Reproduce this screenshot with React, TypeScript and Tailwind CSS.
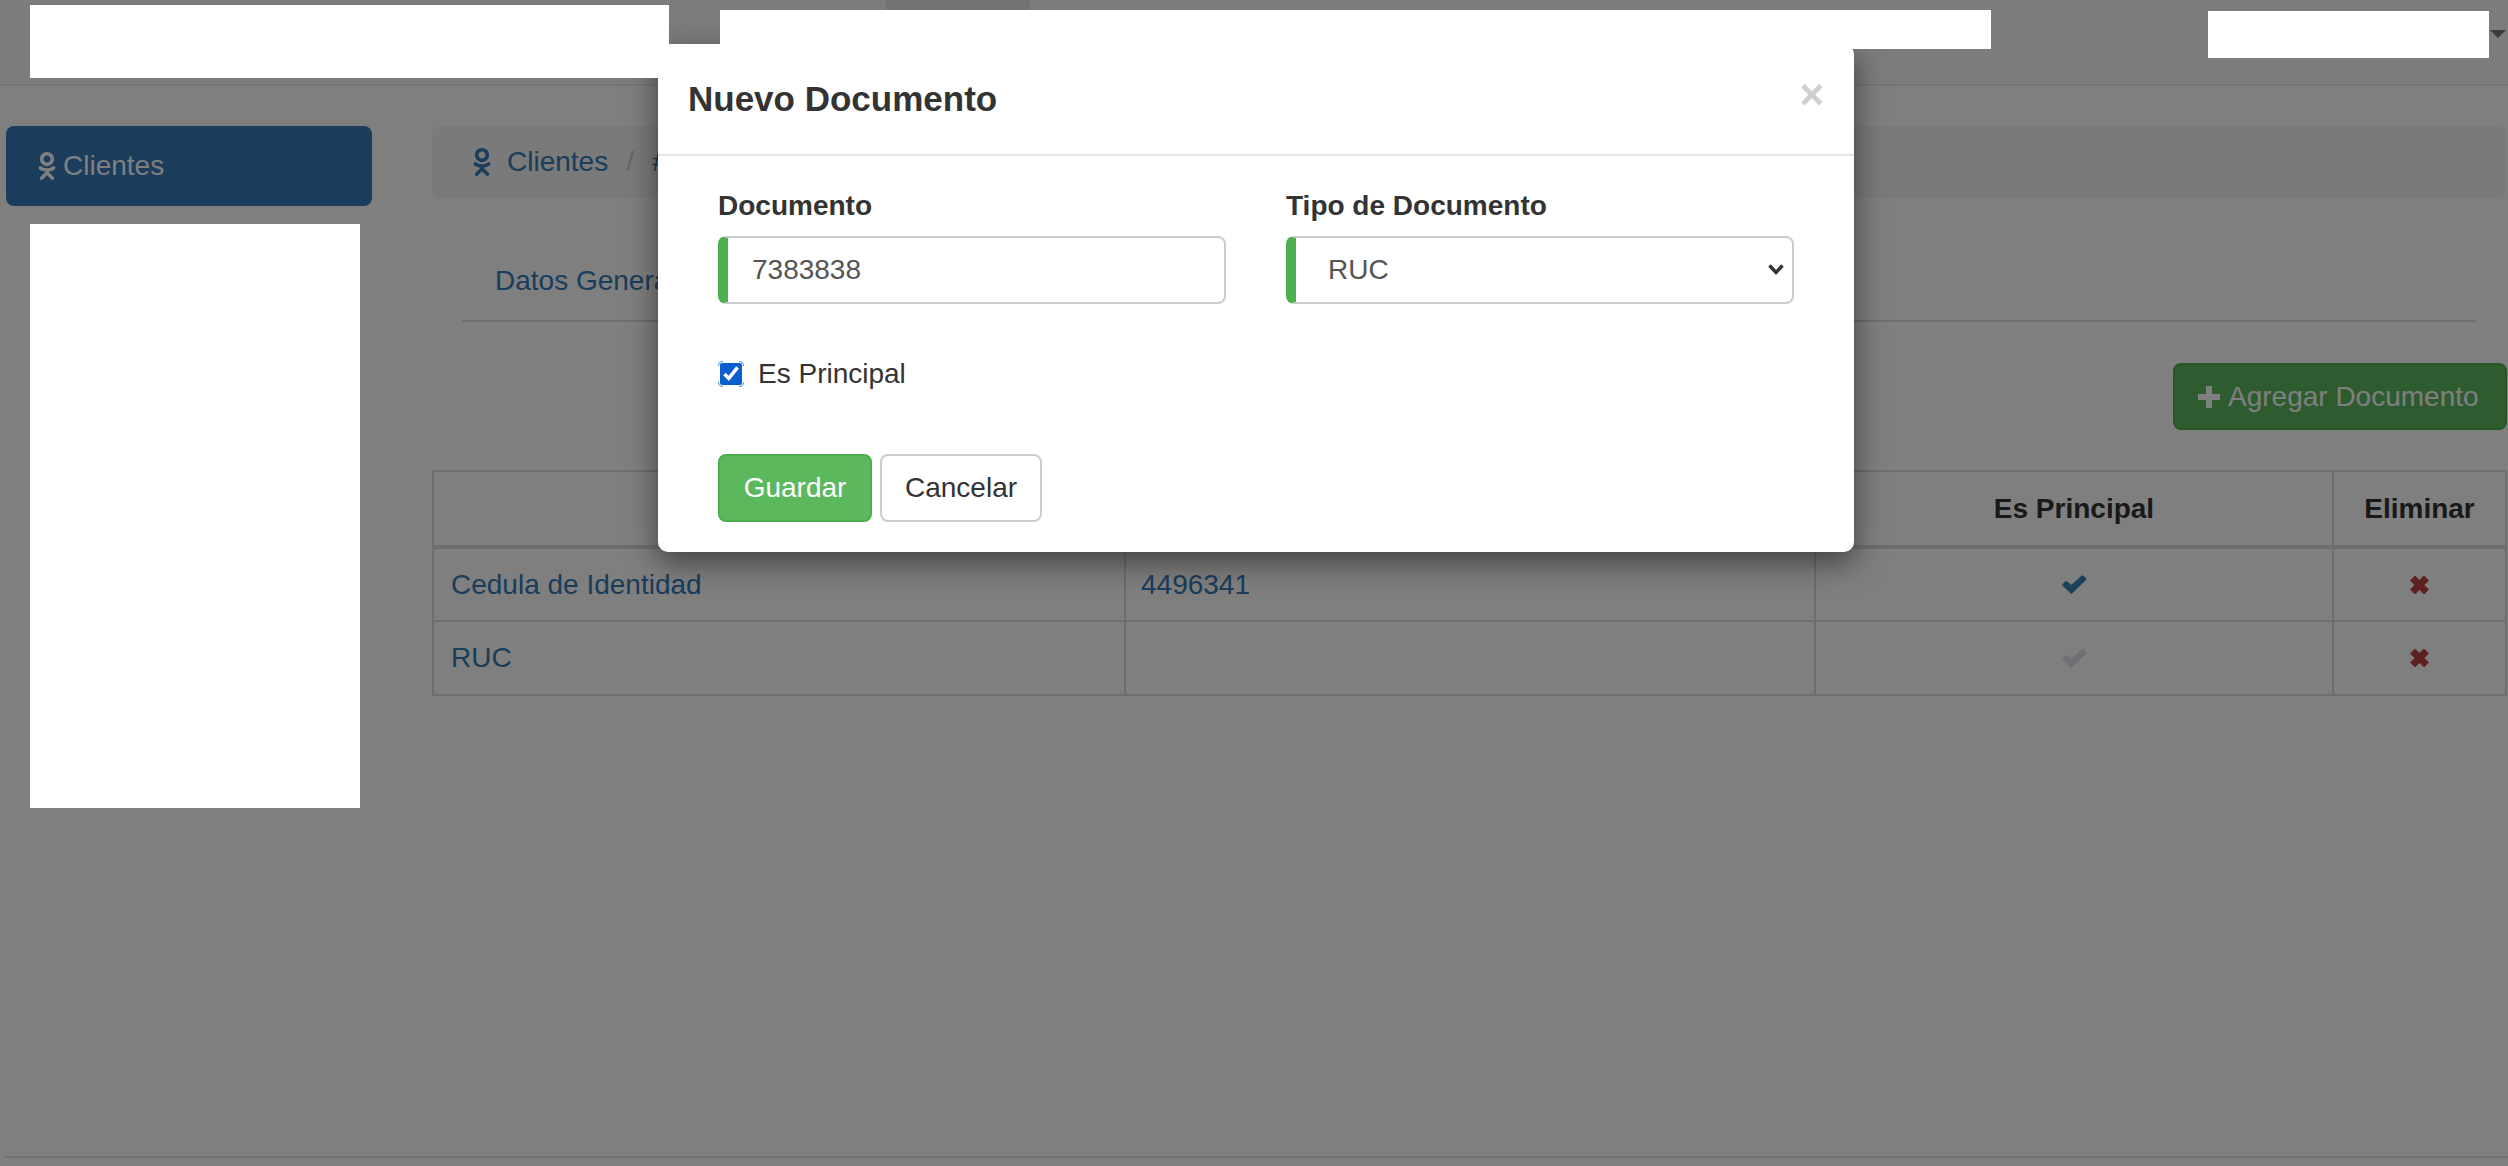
import React from 'react';
import { FaOdnoklassniki } from 'react-icons/fa';

const CheckMark = ({ className }: { className: string }) => (
  <svg viewBox="0 0 25 19" className={`w-[25px] h-[19px] mx-auto ${className}`} fill="currentColor" stroke="currentColor" strokeWidth="2" strokeLinejoin="round">
    <path d="M1.2 10 L4 7 L9.5 11 L20.5 1.2 L23.5 4 L9.5 17.8 Z" />
  </svg>
);

const RemoveMark = () => (
  <svg viewBox="0 0 19 18" className="w-[19px] h-[18px] mx-auto text-[#ba4241]" fill="none" stroke="currentColor" strokeWidth="7">
    <path d="M2.5 2 L16.5 16 M16.5 2 L2.5 16" />
  </svg>
);

const rows = [
  { tipo: 'Cedula de Identidad', numero: '4496341', principal: true },
  { tipo: 'RUC', numero: '', principal: false },
];

const App = () => {
  return (
    <div className="relative h-[1166px] w-[2508px] overflow-hidden bg-white flex flex-col text-[28px] text-[#333] font-['Liberation_Sans',sans-serif]">
      {/* navbar */}
      <nav className="relative h-[86px] shrink-0 flex border-b-2 border-[#e7e7e7] bg-[#f8f8f8]">
        <div className="ml-[886px] w-[144px] h-full bg-[#e7e7e7]"></div>
        <div className="ml-auto mr-[2px] mt-[30px] w-0 h-0 border-x-8 border-t-8 border-x-transparent border-t-[#777]"></div>
        {/* redacted areas */}
        <div className="absolute z-50 left-[30px] top-[5px] w-[639px] h-[73px] bg-white"></div>
        <div className="absolute z-50 left-[720px] top-[10px] w-[1271px] h-[39px] bg-white"></div>
        <div className="absolute z-50 left-[2208px] top-[11px] w-[281px] h-[47px] bg-white"></div>
      </nav>

      <div className="flex flex-1">
        {/* sidebar */}
        <aside className="ml-[6px] w-[366px] pt-[40px] shrink-0">
          <a className="flex items-center h-[80px] pl-[27px] gap-[2px] rounded-lg bg-[#337ab7] text-white">
            <FaOdnoklassniki className="text-[28px]" />
            <span>Clientes</span>
          </a>
          <div className="relative z-50 ml-[24px] mt-[18px] w-[330px] h-[584px] bg-white"></div>
        </aside>

        {/* content */}
        <main className="ml-[60px] flex-1 mr-[3px] pt-[40px]">
          <div className="flex items-center h-[72px] pl-[36px] rounded-lg bg-[#f5f5f5] text-[#337ab7]">
            <FaOdnoklassniki className="text-[28px]" />
            <span className="ml-[11px]">Clientes</span>
            <span className="ml-[18px] text-[#ccc]">/</span>
            <span className="ml-[18px]"># Documentos</span>
          </div>

          <div className="ml-[30px] mr-[31px] mt-[42px] h-[82px] flex border-b-2 border-[#ddd] text-[#337ab7]">
            <a className="pl-[33px] pt-[20px]">Datos Generales</a>
            <a className="pl-[60px] pt-[20px]">Documentos</a>
          </div>

          <div className="mt-[41px] flex justify-end">
            <button className="flex items-center h-[67px] w-[334px] pl-[23px] gap-[8px] rounded-lg border-2 border-[#4cae4c] bg-[#5cb85c] text-white">
              <svg viewBox="0 0 22 22" className="w-[22px] h-[22px]" fill="currentColor">
                <path d="M8 0 H14 V8 H22 V14 H14 V22 H8 V14 H0 V8 H8 Z" />
              </svg>
              <span>Agregar Documento</span>
            </button>
          </div>

          <table className="mt-[40px] w-full table-fixed border-collapse">
            <colgroup>
              <col className="w-[692px]" />
              <col className="w-[690px]" />
              <col className="w-[518px]" />
              <col className="w-[173px]" />
            </colgroup>
            <thead>
              <tr className="h-[76px] font-bold">
                <th className="border-2 border-b-4 border-[#ddd]">Tipo</th>
                <th className="border-2 border-b-4 border-[#ddd]">Número</th>
                <th className="border-2 border-b-4 border-[#ddd]">Es Principal</th>
                <th className="border-2 border-b-4 border-[#ddd]">Eliminar</th>
              </tr>
            </thead>
            <tbody>
              {rows.map((row) => (
                <tr key={row.tipo} className="h-[74px]">
                  <td className="border-2 border-[#ddd] pl-[17px] text-[#337ab7]">{row.tipo}</td>
                  <td className="border-2 border-[#ddd] pl-[15px] text-[#337ab7]">{row.numero}</td>
                  <td className="border-2 border-[#ddd]">
                    <CheckMark className={row.principal ? 'text-[#3585b5]' : 'text-[#dddde8]'} />
                  </td>
                  <td className="border-2 border-[#ddd]">
                    <RemoveMark />
                  </td>
                </tr>
              ))}
            </tbody>
          </table>
        </main>
      </div>

      <footer className="ml-[5px] h-[10px] shrink-0 border-t-2 border-[#e7e7e7]"></footer>

      {/* backdrop */}
      <div className="absolute inset-0 z-40 bg-black/50"></div>

      {/* modal */}
      <div className="absolute z-[45] left-[658px] top-[44px] w-[1196px] h-[508px] rounded-[10px] bg-white shadow-[0_10px_30px_rgba(0,0,0,0.5)]">
        <div className="relative h-[112px] border-b-2 border-[#e5e5e5] pl-[30px] pt-[37px]">
          <h4 className="text-[35px] leading-[36px] font-bold">Nuevo Documento</h4>
          <span className="absolute right-[30px] top-[26px] text-[42px] leading-[50px] font-bold text-[#cfcfcf]">×</span>
        </div>

        <div className="px-[60px] pt-[34px]">
          <div className="grid grid-cols-2 gap-x-[60px]">
            <div>
              <label className="block h-[46px] font-bold leading-[32px]">Documento</label>
              <input
                readOnly
                value="7383838"
                className="w-full h-[68px] pl-[24px] rounded-lg border-2 border-[#ccc] border-l-[10px] border-l-[#4cae4c] text-[#555] outline-none"
              />
            </div>
            <div>
              <label className="block h-[46px] font-bold leading-[32px]">Tipo de Documento</label>
              <div className="relative">
                <select className="appearance-none w-full h-[68px] pl-[32px] rounded-lg border-2 border-[#ccc] border-l-[10px] border-l-[#4cae4c] bg-white text-[#555] outline-none">
                  <option>RUC</option>
                  <option>Cedula de Identidad</option>
                </select>
                <svg viewBox="0 0 16 11" className="absolute right-[10px] top-[28px] w-[16px] h-[11px] text-[#333]" fill="none" stroke="currentColor" strokeWidth="3.4">
                  <path d="M1.5 1.5 L8 8.5 L14.5 1.5" />
                </svg>
              </div>
            </div>
          </div>

          <label className="mt-[48px] flex items-center h-[44px]">
            <span className="relative w-[26px] h-[26px] flex items-center justify-center">
              <input type="checkbox" checked readOnly className="w-[22px] h-[22px] accent-[#0b5fcc] m-0" />
              <svg viewBox="0 0 26 26" className="absolute inset-0 w-[26px] h-[26px] text-[#4a90e2]" fill="none" stroke="currentColor" strokeWidth="1">
                <path d="M0.5 5 Q0.5 0.5 5 0.5 M21 0.5 Q25.5 0.5 25.5 5 M25.5 21 Q25.5 25.5 21 25.5 M5 25.5 Q0.5 25.5 0.5 21" />
              </svg>
            </span>
            <span className="ml-[14px]">Es Principal</span>
          </label>

          <div className="mt-[58px] flex gap-[8px]">
            <button className="w-[154px] h-[68px] rounded-lg border-2 border-[#4cae4c] bg-[#5cb85c] text-white">Guardar</button>
            <button className="w-[162px] h-[68px] rounded-lg border-2 border-[#ccc] bg-white">Cancelar</button>
          </div>
        </div>
      </div>
    </div>
  );
};

export default App;
